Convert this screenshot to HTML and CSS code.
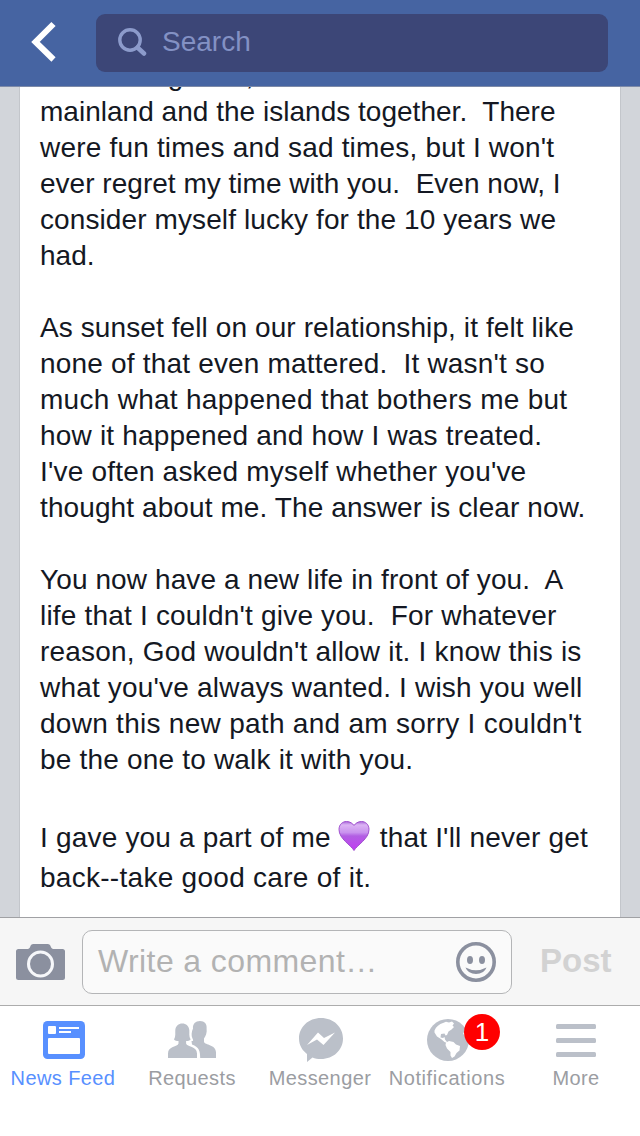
FILE: index.html
```html
<!DOCTYPE html>
<html lang="en">
<head>
    <meta charset="UTF-8">
    <meta name="viewport" content="width=device-width, initial-scale=1.0">
    <title>News Feed</title>
    <link rel="stylesheet" href="styles.css">
</head>
<body>
    <header class="topbar">
        <svg class="back" width="26" height="42" viewBox="0 0 26 42"><path d="M23.500 3 5.500 21 23.500 38.500" fill="none" stroke="#fff" stroke-width="6"/></svg>
        <div class="search">
            <svg width="30" height="30" viewBox="0 0 30 30" fill="none" stroke="#8c9bcb"><circle cx="13" cy="12" r="10.200" stroke-width="3.400"/><path d="M20.500 19.500 27 25.500" stroke-width="4.500" stroke-linecap="round"/></svg>
            <span class="search-text">Search</span>
        </div>
    </header>

    <main class="feed">
        <article class="post">
            <div class="line">were all together, on the</div>
            <div class="line">mainland and the islands together.  There</div>
            <div class="line wider">were fun times and sad times, but I won't</div>
            <div class="line">ever regret my time with you.  Even now, I</div>
            <div class="line wide">consider myself lucky for the 10 years we</div>
            <div class="line">had.</div>
            <div class="line"> </div>
            <div class="line wide">As sunset fell on our relationship, it felt like</div>
            <div class="line wider">none of that even mattered.  It wasn't so</div>
            <div class="line widest">much what happened that bothers me but</div>
            <div class="line wider">how it happened and how I was treated.</div>
            <div class="line wider">I've often asked myself whether you've</div>
            <div class="line wide">thought about me. The answer is clear now.</div>
            <div class="line"> </div>
            <div class="line wide">You now have a new life in front of you.  A</div>
            <div class="line wider">life that I couldn't give you.  For whatever</div>
            <div class="line wider">reason, God wouldn't allow it. I know this is</div>
            <div class="line wider">what you've always wanted. I wish you well</div>
            <div class="line widest">down this new path and am sorry I couldn't</div>
            <div class="line wider">be the one to walk it with you.</div>
            <div class="line tall"> </div>
            <div class="line tall wider">I gave you a part of me <svg class="heart" width="32" height="32" viewBox="0 0 32 32"><defs><linearGradient id="purple" x1="0" y1="0" x2="0" y2="1"><stop offset="0" stop-color="#a868d8"/><stop offset=".12" stop-color="#dcb4f4"/><stop offset=".38" stop-color="#c992ee"/><stop offset=".5" stop-color="#b25ee3"/><stop offset="1" stop-color="#c13cf2"/></linearGradient></defs><path d="M16 30.500C13 25 1 19 1 9.500 1 4.500 4.500 1.500 8.500 1.500c3.500 0 6.200 2 7.500 4 1.300-2 4-4 7.500-4 4 0 7.500 3 7.500 8C31 19 19 25 16 30.500z" fill="url(#purple)" stroke="#a050cf"/></svg> that I'll never get</div>
            <div class="line tall widest">back--take good care of it.</div>
        </article>
    </main>

    <section class="comment-bar">
        <svg class="camera" width="49" height="36" viewBox="0 0 49 36"><path d="M2.500 5H11c1.500 0 2.500-.6 3-1.800C14.700 1.200 15.500 0 17.500 0h14c2 0 2.800 1.200 3.500 3.200.5 1.200 1.500 1.800 3 1.800h8.500A2.500 2.500 0 0 1 49 7.500v26a2.500 2.500 0 0 1-2.500 2.500h-44A2.500 2.500 0 0 1 0 33.500v-26A2.500 2.500 0 0 1 2.500 5z" fill="#8b909f"/><circle cx="24.500" cy="20" r="12" fill="none" stroke="#f6f7fa" stroke-width="3"/></svg>
        <div class="comment-input">
            <span class="placeholder">Write a comment…</span>
            <svg width="40" height="40" viewBox="0 0 40 40"><circle cx="20" cy="20" r="18.200" fill="none" stroke="#8b909f" stroke-width="3.600"/><ellipse cx="14" cy="18" rx="3" ry="4" fill="#8b909f"/><ellipse cx="26" cy="18" rx="3" ry="4" fill="#8b909f"/><path d="M9.500 25.500Q20 31 30.500 25.500 28 32 20 32T9.500 25.500z" fill="#8b909f"/></svg>
        </div>
        <span class="post-button">Post</span>
    </section>

    <nav class="tabs">
        <div class="tab active">
            <div class="tab-icon"><svg width="42" height="38" viewBox="0 0 42 38"><rect width="42" height="38" rx="4.500" fill="#5890ff"/><g fill="#fff"><rect x="5" y="5" width="8" height="8" rx="1"/><rect x="16" y="6" width="20" height="2"/><rect x="16" y="10" width="12" height="2"/><rect x="5" y="17" width="32" height="16" rx="1"/></g></svg></div>
            <span class="label news">News Feed</span>
        </div>
        <div class="tab">
            <div class="tab-icon"><svg width="48" height="38" viewBox="0 0 48 38" fill="#bbc0c9"><path d="M25 7.500C24.500 3 27.500 0 32 0s7.200 3 6.600 7.500c.6 4.500-.9 7.500-2.600 10V21c1 3 12 2.500 12 10.500V37H32.200c0-7-1.200-11-8.200-13.500l-.5-3.500c2 0 2-.5 1-2.500-1.500-3-1-6.500.5-10z"/><path d="M0 37v-4.500C0 25 9.500 26 10.500 22.500V20C8.500 20 7 19.500 6 18.500 8 15 7 12 7.300 9c.4-4 3.200-6.500 7-6.500s6.600 2.500 7 6.500c.3 3-.7 6 1.300 9.500-1 1-2.500 1.500-4.500 1.500v2.500C19 26 29 25 29 32.500V37z"/></svg></div>
            <span class="label requests">Requests</span>
        </div>
        <div class="tab">
            <div class="tab-icon messenger-icon"><svg width="44" height="44" viewBox="0 0 44 44"><path d="M22 0C34.500 0 44 9 44 20.500S34.500 41 22 41c-3.500 0-6-.5-8.500-1.500L8 44v-8C3.500 32.500 0 27.500 0 20.500 0 9 9.500 0 22 0z" fill="#bbc0c9"/><path d="M8 27 19 14.500l6 5.500 11-5.500L24.500 27 18 21.500z" fill="#fff"/></svg></div>
            <span class="label messenger">Messenger</span>
        </div>
        <div class="tab">
            <div class="tab-icon globe">
                <svg width="42" height="42" viewBox="0 0 42 42"><circle cx="21" cy="21" r="21" fill="#bbc0c9"/><g fill="#fff"><path d="M7.500 11.500C9 7.500 12.500 5 16 4l3-1.200 3 .7 3-1 2 2-1.500 2 1.500 1.500-2.500 2.500-3 2-1.500 3.500-1.500.5-1-2-3.500.5-.5 3.500 2.500.5 1.500-1 .5 2.500 2 2.500 2.500.5-1 1-4-1.500-3.500-3-4-2.500-2.500-4z"/><path d="m19 23.500 3-1.500 4.500 1 2.500 2.500 4 1.500-.5 4.500-3 2.500-2 3.500-2.500 1.500-1.500-2.500V33l-3.500-3.500-1.500-3.500z"/><path d="m36 14 3-1.500 1.500 3 .5 4-3-1.500z"/></g></svg>
                <span class="badge">1</span>
            </div>
            <span class="label notifications">Notifications</span>
        </div>
        <div class="tab">
            <div class="tab-icon"><svg width="40" height="34" viewBox="0 -1 40 34" fill="#bbc0c9"><rect width="40" height="5" rx="1.500"/><rect y="14" width="40" height="5" rx="1.500"/><rect y="28" width="40" height="5" rx="1.500"/></svg></div>
            <span class="label more">More</span>
        </div>
    </nav>
</body>
</html>
```
FILE: styles.css
```css
* {
    box-sizing: border-box;
}
body {
    margin: 0;
    width: 640px;
    height: 1136px;
    overflow: hidden;
    display: flex;
    flex-direction: column;
    font-family: "Liberation Sans", Arial, sans-serif;
    background: #fff;
}
svg {
    display: block;
    flex: none;
}
.topbar {
    height: 87px;
    flex: none;
    display: flex;
    align-items: flex-start;
    padding: 14px 32px 0 30px;
    background: #4664a2;
    border-bottom: 1px solid #7d8aa8;
}
.back {
    margin-top: 7px;
}
.search {
    flex: 1;
    height: 58px;
    margin-left: 40px;
    padding-left: 21px;
    display: flex;
    align-items: center;
    border-radius: 9px;
    background: #3c4677;
}
.search-text {
    margin: -3px 0 0 15px;
    font-size: 28px;
    line-height: 40px;
    color: #8391c4;
}
.feed {
    height: 830px;
    flex: none;
    overflow: hidden;
    padding: 0 19px;
    background: #d2d5da;
}
.post {
    height: 860px;
    margin-top: -29px;
    padding: 0 20px;
    background: #fff;
    border: solid #c3c6cb;
    border-width: 0 1px;
}
.line {
    height: 36px;
    font-size: 28px;
    line-height: 36px;
    letter-spacing: 0.02px;
    white-space: pre;
    color: #141823;
}
.wide {
    letter-spacing: 0.1px;
}
.wider {
    letter-spacing: 0.19px;
}
.widest {
    letter-spacing: 0.28px;
}
.tall {
    height: 40px;
    line-height: 40px;
}
.heart {
    display: inline-block;
    vertical-align: -5px;
    margin: 0 2px 0 -1px;
}
.comment-bar {
    height: 89px;
    flex: none;
    display: flex;
    align-items: center;
    padding-left: 16px;
    border-top: 1px solid #a0a1a4;
    border-bottom: 1px solid #acacac;
    background: #f6f6f6;
}
.comment-input {
    width: 430px;
    height: 64px;
    margin-left: 17px;
    padding: 0 15px;
    display: flex;
    align-items: center;
    justify-content: space-between;
    border: 1px solid #b4b5b7;
    border-radius: 10px;
    background: #fafafa;
}
.placeholder {
    font-size: 32px;
    letter-spacing: 0.4px;
    color: #b2b2b2;
}
.post-button {
    margin: -2px 0 0 28px;
    font-size: 33px;
    font-weight: bold;
    color: #d2d2d2;
}
.tabs {
    flex: 1;
    display: flex;
}
.tab {
    width: 128px;
    display: flex;
    flex-direction: column;
    align-items: center;
    color: #9b9da2;
}
.active {
    color: #5890ff;
}
.tab-icon {
    height: 60px;
    padding-top: 8px;
    display: flex;
    align-items: center;
}
.messenger-icon {
    padding-left: 2px;
}
.label {
    font-size: 20px;
    line-height: 24px;
    letter-spacing: 0.4px;
    white-space: nowrap;
}
.news {
    margin-right: 2px;
}
.notifications {
    letter-spacing: 0.6px;
    margin-right: 2px;
}
.globe {
    position: relative;
}
.badge {
    position: absolute;
    left: 37px;
    top: 8px;
    width: 36px;
    height: 36px;
    border-radius: 50%;
    background: #f00;
    color: #fff;
    font-size: 26px;
    line-height: 36px;
    text-align: center;
}
```
